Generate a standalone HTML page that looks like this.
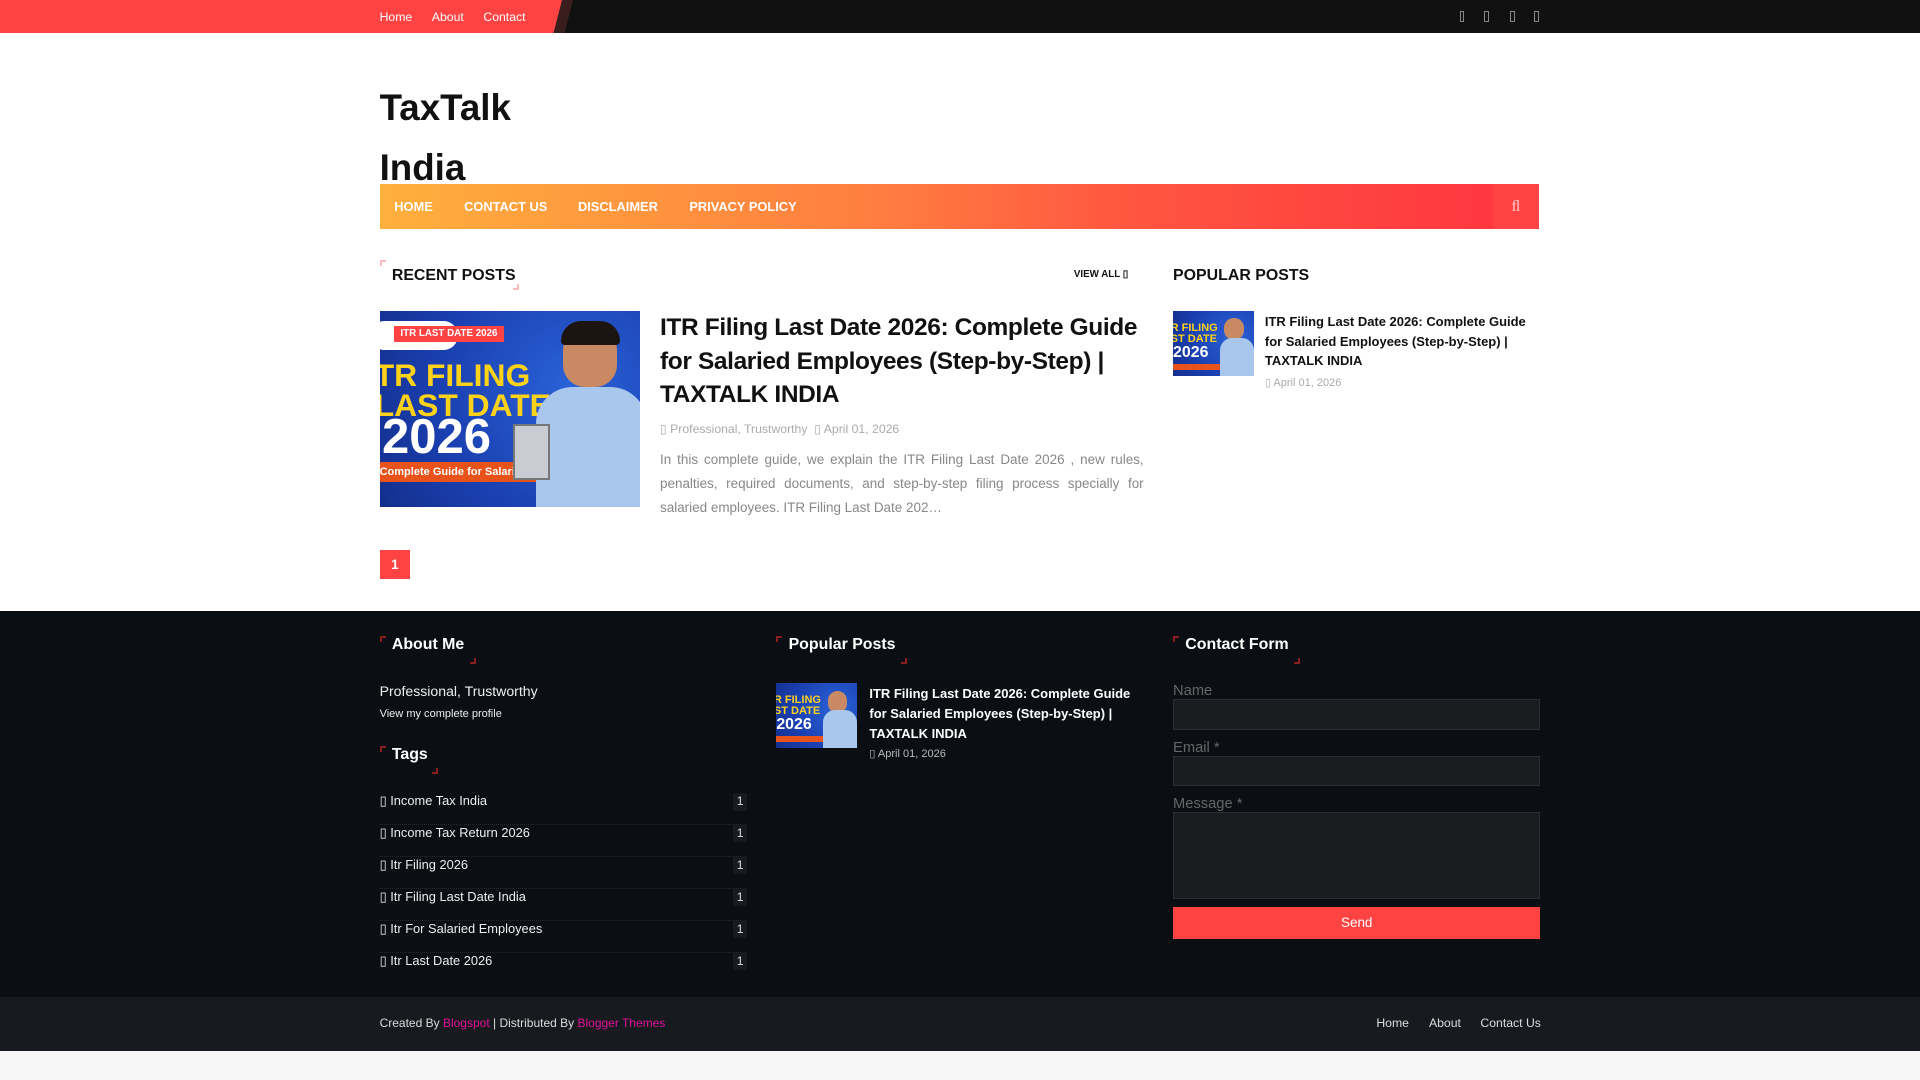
<!DOCTYPE html>
<html><head><meta charset="utf-8">
<style>
html{zoom:1.22449}
*{margin:0;padding:0;box-sizing:border-box}
body{width:1568px;height:882px;overflow:hidden;font-family:"Liberation Sans",Arial,sans-serif;background:#fff;position:relative;color:#111}
.abs{position:absolute}
a{text-decoration:none;color:inherit}
.top{left:0;top:0;width:1568px;height:27px;background:#111}
.topred{left:0;top:0;width:462px;height:27px;background:#ff4343;clip-path:polygon(0 0,100% 0,calc(100% - 7px) 100%,0 100%)}
.topstripe{left:452px;top:0;width:16px;height:27px;background:#3a1e1e;clip-path:polygon(7px 0,100% 0,9px 100%,0 100%)}
.toplinks{left:310px;top:8px;font-size:10px;color:#fff}
.toplinks span{margin-right:16px}
.soc{top:9px;width:4px;height:9px;border:1px solid #888}
.logo{left:310px;top:64px;font-size:30px;font-weight:bold;line-height:49px;color:#111}
.nav{left:310px;top:150px;width:947px;height:37px;background:linear-gradient(90deg,#ffb03d,#ff7a40 45%,#ff5540 65%,#ff3540 98%)}
.nav span{position:absolute;top:0;color:#fff;font-size:10.5px;font-weight:bold;line-height:37px}
.srch{right:0;top:0;width:38px;height:37px;background:#ff4343;color:#fcc;font-family:"Liberation Serif",serif;font-size:13px;text-align:center;line-height:37px}
.ttl{font-size:13px;font-weight:bold;text-transform:uppercase}
.cnr1{width:5px;height:5px;border-left:2px solid #ff4343;border-top:2px solid #ff4343}
.cnr2{width:5px;height:5px;border-right:2px solid #ff4343;border-bottom:2px solid #ff4343}
.thumb{background:radial-gradient(circle at 75% 40%,#2a63d8,#1a3fb0 60%,#142f8c);overflow:hidden}
.ylw{color:#ffd21a;font-weight:bold;font-family:"Liberation Sans",sans-serif;line-height:0.95;white-space:nowrap}
.meta{color:#aaa;font-size:10px}
.foot{left:0;top:499px;width:1568px;height:315px;background:#0b0e13}
.bot{left:0;top:814px;width:1568px;height:44px;background:#171a1f}
.under{left:0;top:858px;width:1568px;height:24px;background:#f7f7f7}
.wt{color:#fff;font-size:13px;font-weight:bold}
.dc1{width:5px;height:5px;border-left:2px solid #8a1d1d;border-top:2px solid #8a1d1d}
.dc2{width:5px;height:5px;border-right:2px solid #8a1d1d;border-bottom:2px solid #8a1d1d}
.tag{left:310px;width:300px;height:26px;border-bottom:1px dotted #252a30;color:#eee;font-size:10.5px}
.tag b{position:absolute;right:0;top:0;width:11px;height:14px;background:#171a1f;color:#ddd;font-weight:normal;font-size:10px;text-align:center;line-height:14px}
.lbl{color:#666;font-size:12px}
.inp{left:958px;width:300px;background:#1a1c20;border:1px solid #2b2e33}
</style></head><body>
<div class="abs top"></div>
<div class="abs topred"></div>
<div class="abs topstripe"></div>
<div class="abs toplinks"><span>Home</span><span>About</span><span>Contact</span></div>
<div class="abs soc" style="left:1192px"></div>
<div class="abs soc" style="left:1212px"></div>
<div class="abs soc" style="left:1233px"></div>
<div class="abs soc" style="left:1253px"></div>

<div class="abs logo">TaxTalk<br>India</div>
<div class="abs nav"><span style="left:12px">HOME</span><span style="left:69px">CONTACT US</span><span style="left:162px">DISCLAIMER</span><span style="left:253px">PRIVACY POLICY</span><div class="abs srch">ﬂ</div></div>

<div class="abs cnr1" style="left:310px;top:212px;border-color:#fbb"></div>
<div class="abs ttl" style="left:320px;top:218px">Recent Posts</div>
<div class="abs cnr2" style="left:419px;top:232px;border-color:#fbb"></div>
<div class="abs" style="left:877px;top:220px;font-size:8px;font-weight:bold">VIEW ALL ▯</div>

<div class="abs thumb" style="left:310px;top:254px;width:213px;height:160px">
  <div class="abs" style="left:-8px;top:8px;width:72px;height:24px;background:#fff;border-radius:12px"></div>
  <div class="abs ylw" style="left:-4px;top:40px;font-size:26px">TR FILING<br>LAST DATE</div>
  <div class="abs" style="left:2px;top:80px;font-size:40px;font-weight:bold;color:#fff">2026</div>
  <div class="abs" style="left:-6px;top:123px;width:150px;height:17px;background:#e8531c;border-radius:9px;color:#fff;font-size:9px;font-weight:bold;line-height:17px;padding-left:6px;white-space:nowrap;overflow:hidden">Complete Guide for Salaried Employees</div>
  <div class="abs" style="left:150px;top:12px;width:44px;height:50px;background:#c98a63;border-radius:20px 20px 18px 18px"></div>
  <div class="abs" style="left:148px;top:8px;width:48px;height:20px;background:#1c1410;border-radius:20px 20px 4px 4px"></div>
  <div class="abs" style="left:128px;top:62px;width:90px;height:100px;background:#a9c6ec;border-radius:30px 30px 0 0"></div>
  <div class="abs" style="left:109px;top:92px;width:30px;height:46px;background:#c9ccd2;border:2px solid #777"></div>
  <div class="abs" style="left:12px;top:12px;background:#ff4343;color:#fff;font-size:8px;font-weight:bold;padding:2px 5px">ITR LAST DATE 2026</div>
</div>
<div class="abs" style="left:539px;top:254px;font-size:20px;font-weight:bold;line-height:27.5px;letter-spacing:-0.3px;white-space:nowrap">ITR Filing Last Date 2026: Complete Guide<br>for Salaried Employees (Step-by-Step) |<br>TAXTALK INDIA</div>
<div class="abs meta" style="left:539px;top:345px">▯ Professional, Trustworthy &nbsp;▯ April 01, 2026</div>
<div class="abs" style="left:539px;top:366px;width:395px;font-size:11px;line-height:19.5px;color:#888;text-align:justify">In this complete guide, we explain the ITR Filing Last Date 2026 , new rules, penalties, required documents, and step-by-step filing process specially for salaried employees. ITR Filing Last Date 202…</div>
<div class="abs" style="left:310px;top:449px;width:25px;height:24px;background:#ff4343;color:#fff;font-size:11px;font-weight:bold;text-align:center;line-height:24px">1</div>

<div class="abs ttl" style="left:958px;top:218px">Popular Posts</div>
<div class="abs thumb" style="left:958px;top:254px;width:66px;height:53px">
  <div class="abs ylw" style="left:-2px;top:10px;font-size:9px">R FILING<br>ST DATE</div>
  <div class="abs" style="left:0;top:27px;font-size:13px;font-weight:bold;color:#fff">2026</div>
  <div class="abs" style="left:0;top:43px;width:46px;height:5px;background:#e8531c"></div>
  <div class="abs" style="left:42px;top:6px;width:16px;height:18px;background:#c98a63;border-radius:8px"></div>
  <div class="abs" style="left:38px;top:22px;width:28px;height:31px;background:#a9c6ec;border-radius:10px 10px 0 0"></div>
</div>
<div class="abs" style="left:1033px;top:255px;width:225px;font-size:10.6px;font-weight:bold;line-height:16px">ITR Filing Last Date 2026: Complete Guide for Salaried Employees (Step-by-Step) | TAXTALK INDIA</div>
<div class="abs meta" style="left:1033px;top:307px;font-size:9px">▯ April 01, 2026</div>

<div class="abs foot"></div>
<div class="abs dc1" style="left:310px;top:519px"></div><div class="abs wt" style="left:320px;top:519px">About Me</div><div class="abs dc2" style="left:384px;top:537px"></div>
<div class="abs" style="left:310px;top:558px;color:#eee;font-size:11.5px">Professional, Trustworthy</div>
<div class="abs" style="left:310px;top:578px;color:#eee;font-size:9px">View my complete profile</div>
<div class="abs dc1" style="left:310px;top:609px"></div><div class="abs wt" style="left:320px;top:609px">Tags</div><div class="abs dc2" style="left:353px;top:627px"></div>
<div class="abs tag" style="top:648px">▯ Income Tax India<b>1</b></div>
<div class="abs tag" style="top:674px">▯ Income Tax Return 2026<b>1</b></div>
<div class="abs tag" style="top:700px">▯ Itr Filing 2026<b>1</b></div>
<div class="abs tag" style="top:726px">▯ Itr Filing Last Date India<b>1</b></div>
<div class="abs tag" style="top:752px">▯ Itr For Salaried Employees<b>1</b></div>
<div class="abs tag" style="top:778px;border:none">▯ Itr Last Date 2026<b>1</b></div>

<div class="abs dc1" style="left:634px;top:519px"></div><div class="abs wt" style="left:644px;top:519px">Popular Posts</div><div class="abs dc2" style="left:736px;top:537px"></div>
<div class="abs thumb" style="left:634px;top:558px;width:66px;height:53px">
  <div class="abs ylw" style="left:-2px;top:10px;font-size:9px">R FILING<br>ST DATE</div>
  <div class="abs" style="left:0;top:27px;font-size:13px;font-weight:bold;color:#fff">2026</div>
  <div class="abs" style="left:0;top:43px;width:46px;height:5px;background:#e8531c"></div>
  <div class="abs" style="left:42px;top:6px;width:16px;height:18px;background:#c98a63;border-radius:8px"></div>
  <div class="abs" style="left:38px;top:22px;width:28px;height:31px;background:#a9c6ec;border-radius:10px 10px 0 0"></div>
</div>
<div class="abs" style="left:710px;top:559px;width:225px;font-size:10.6px;font-weight:bold;line-height:16px;color:#fff">ITR Filing Last Date 2026: Complete Guide for Salaried Employees (Step-by-Step) | TAXTALK INDIA</div>
<div class="abs" style="left:710px;top:610px;font-size:9px;color:#bbb">▯ April 01, 2026</div>

<div class="abs dc1" style="left:958px;top:519px"></div><div class="abs wt" style="left:968px;top:519px">Contact Form</div><div class="abs dc2" style="left:1057px;top:537px"></div>
<div class="abs lbl" style="left:958px;top:558px">Name</div>
<div class="abs inp" style="top:571px;height:25px"></div>
<div class="abs lbl" style="left:958px;top:604px">Email *</div>
<div class="abs inp" style="top:617px;height:25px"></div>
<div class="abs lbl" style="left:958px;top:650px">Message *</div>
<div class="abs inp" style="top:663px;height:71px"></div>
<div class="abs" style="left:958px;top:741px;width:300px;height:26px;background:#ff4343;color:#fff;font-size:11px;text-align:center;line-height:26px">Send</div>

<div class="abs bot"></div>
<div class="abs" style="left:310px;top:830px;font-size:9.8px;color:#ddd">Created By <span style="color:#e0129a">Blogspot</span> | Distributed By <span style="color:#e0129a">Blogger Themes</span></div>
<div class="abs" style="left:1124px;top:830px;font-size:10px;color:#ddd">Home</div>
<div class="abs" style="left:1167px;top:830px;font-size:10px;color:#ddd">About</div>
<div class="abs" style="left:1209px;top:830px;font-size:10px;color:#ddd">Contact Us</div>
<div class="abs under"></div>
</body></html>
